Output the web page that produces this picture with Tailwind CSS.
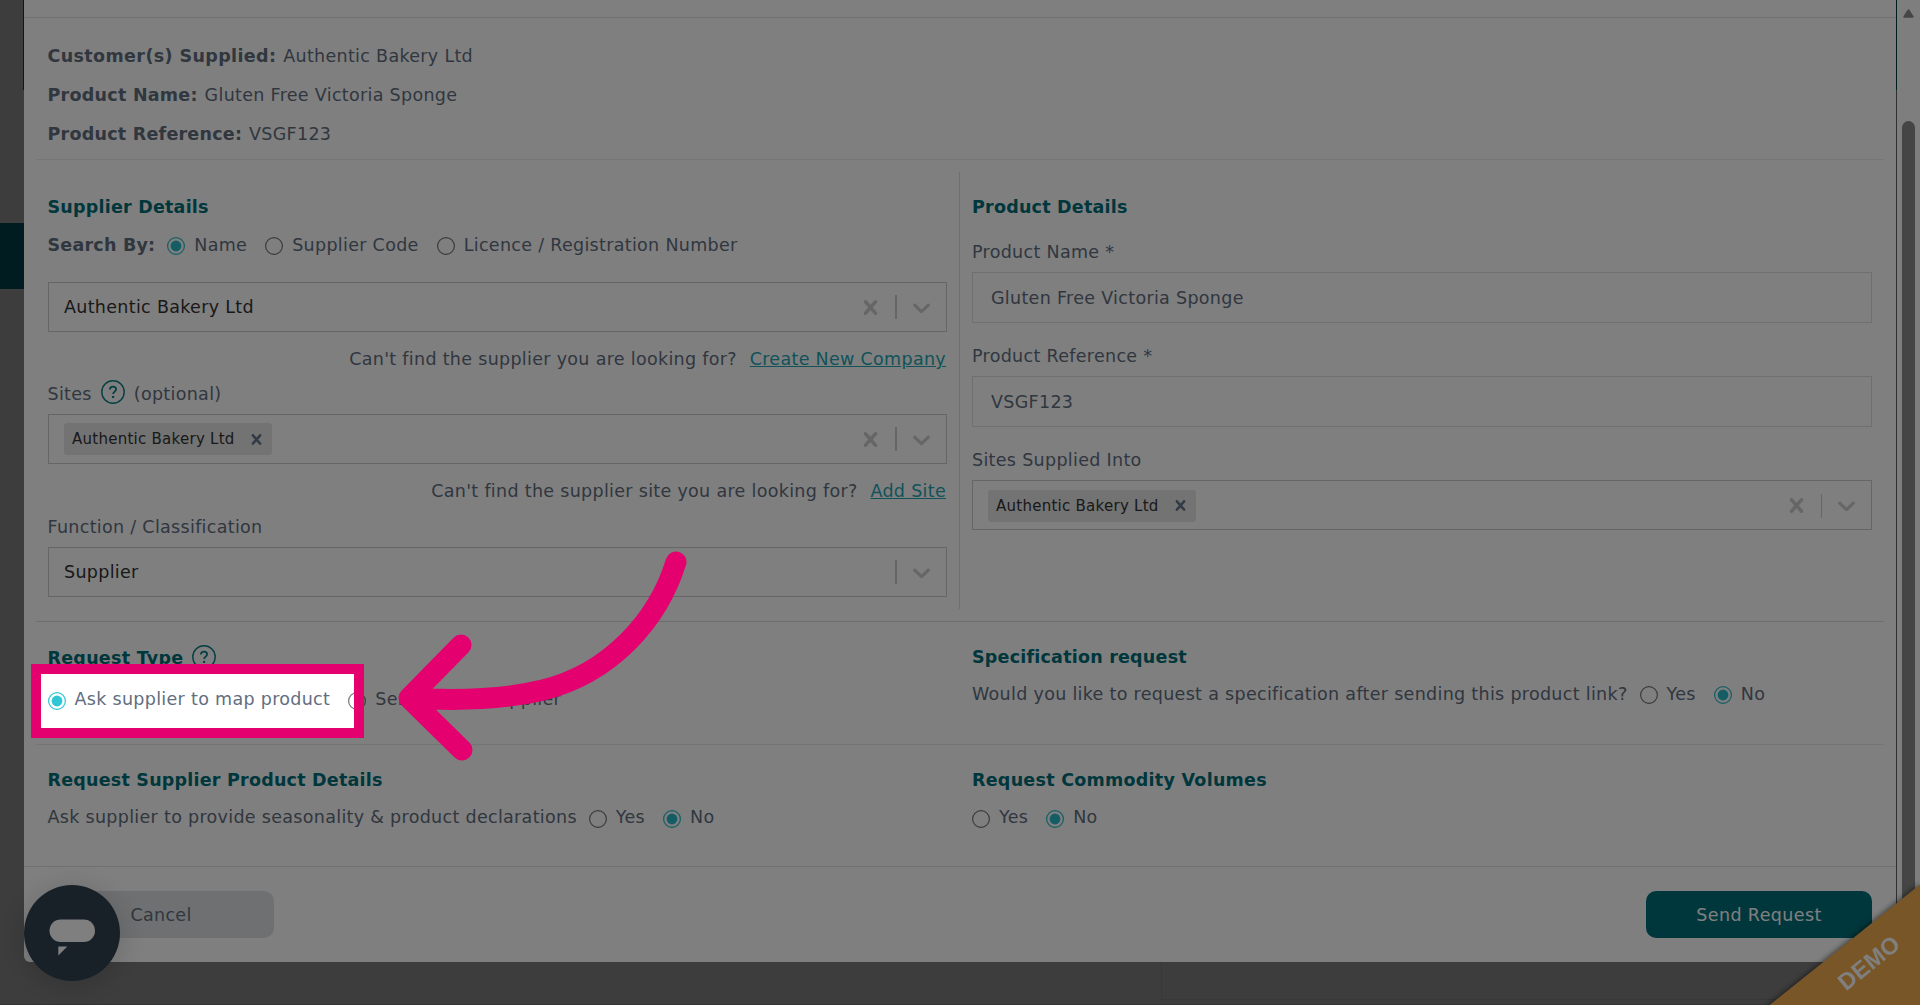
<!DOCTYPE html>
<html lang="en">
<head>
<meta charset="utf-8">
<title>Request product link</title>
<script src="https://cdn.jsdelivr.net/npm/@tailwindcss/browser@4"></script>
</head>
<body class="relative h-[1005px] w-[1920px] overflow-hidden bg-[#7b7b7b] font-['DejaVu_Sans',sans-serif] text-[17.5px] leading-[24px] tracking-[0.31px] text-[#626e7f]">
<svg class="hidden">
  <symbol id="x" viewBox="0 0 20 20"><path fill="currentColor" d="M14.348 14.849c-0.469 0.469-1.229 0.469-1.697 0l-2.651-3.030-2.651 3.029c-0.469 0.469-1.229 0.469-1.697 0-0.469-0.469-0.469-1.229 0-1.697l2.758-3.15-2.759-3.152c-0.469-0.469-0.469-1.228 0-1.697s1.228-0.469 1.697 0l2.652 3.031 2.651-3.031c0.469-0.469 1.228-0.469 1.697 0s0.469 1.229 0 1.697l-2.758 3.152 2.758 3.15c0.469 0.469 0.469 1.229 0 1.698z"/></symbol>
  <symbol id="chev" viewBox="0 0 20 20"><path fill="currentColor" d="M4.516 7.548c0.436-0.446 1.043-0.481 1.576 0l3.908 3.747 3.908-3.747c0.533-0.481 1.141-0.446 1.574 0 0.436 0.445 0.408 1.197 0 1.615-0.406 0.418-4.695 4.502-4.695 4.502-0.217 0.223-0.502 0.335-0.787 0.335s-0.57-0.112-0.789-0.335c0 0-4.287-4.084-4.695-4.502s-0.436-1.17 0-1.615z"/></symbol>
  <symbol id="on" viewBox="0 0 18 18"><circle cx="9" cy="9" r="8.4" fill="none" stroke="currentColor" stroke-width="1.2"/><circle cx="9" cy="9" r="5.4" fill="currentColor"/></symbol>
  <symbol id="off" viewBox="0 0 18 18"><circle cx="9" cy="9" r="8.4" fill="none" stroke="#767676" stroke-width="1.2"/></symbol>
  <symbol id="help" viewBox="0 0 24 24"><circle cx="12" cy="12" r="11.2" fill="none" stroke="#0b7f88" stroke-width="1.4"/><path d="M8.9 9.6c0-1.9 1.3-3 3.1-3s3.1 1.1 3.1 2.7c0 2.2-3 2.4-3 4.7" fill="none" stroke="#0b7f88" stroke-width="1.8"/><circle cx="12.1" cy="16.9" r="1.2" fill="#0b7f88"/></symbol>
</svg>

<!-- page behind the modal -->
<div class="absolute inset-y-0 left-0 w-6">
  <div class="mt-[223px] h-[66px] bg-[#003840]"></div>
</div>
<div class="absolute left-[23px] top-0 h-[90px] w-px bg-[#003840]"></div>
<div class="absolute left-[1161px] top-[962px] h-[38px] w-[700px] border-b border-l border-[#707070]"></div>
<div class="absolute bottom-0 left-0 h-px w-full bg-[#6c6468]"></div>
<div class="absolute left-[1896px] top-0 h-[1005px] w-px bg-[#606060]"></div>
<div class="absolute left-[1896px] top-0 h-[90px] w-px bg-[#003840]"></div>

<!-- scrollbar -->
<div class="absolute right-0 top-0 flex h-full w-[23px] flex-col items-center bg-[#fcfcfc] pr-px">
  <svg class="mt-[9px] h-[9px] w-[11px]" viewBox="0 0 11 9"><path d="M5.5 1.2L9.8 7.8H1.2Z" fill="#8b8b8b" stroke="#8b8b8b" stroke-width="2" stroke-linejoin="round"/></svg>
  <div class="mt-[103px] h-[900px] w-[13px] rounded-full bg-[#8b8b8b]"></div>
</div>

<!-- modal -->
<main class="absolute left-6 top-0 flex h-[962px] w-[1872px] flex-col rounded-b-md bg-white">
  <div class="h-[18px] shrink-0 border-b border-[#e2e2e2]"></div>
  <div class="px-3">
    <section class="flex h-[142px] flex-col gap-[15px] border-b border-[#ececec] pl-[11.500px] pr-3 pt-[26px]">
      <p><b class="mr-px tracking-[0.38px]">Customer(s) Supplied:</b> Authentic Bakery Ltd</p>
      <p><b class="mr-px tracking-[0.26px]">Product Name:</b> Gluten Free Victoria Sponge</p>
      <p><b class="mr-px tracking-[0.24px]">Product Reference:</b> VSGF123</p>
    </section>

    <section class="flex h-[462px] border-b border-[#dcdcdc] pb-3 pt-3">
      <div class="w-[924px] border-r border-[#dedede] pl-3 pr-3 pt-[23px]">
        <h2 class="-ml-[0.500px] font-bold tracking-[0.22px] text-[#006e78]">Supplier Details</h2>
        <div class="mt-[14px] -ml-[0.500px] flex items-center">
          <b class="tracking-[0.22px]">Search By:</b>
          <svg class="ml-3 mr-[9px] mt-[2px] size-[18px] text-[#29bac9]"><use href="#on"/></svg>Name
          <svg class="ml-[18px] mr-[9px] mt-[2px] size-[18px]"><use href="#off"/></svg>Supplier Code
          <svg class="ml-[18px] mr-[9px] mt-[2px] size-[18px]"><use href="#off"/></svg>Licence / Registration Number
        </div>
        <div class="mt-[25px] flex h-[50px] items-center border border-[#ccc] pl-[15px] pr-[14px] text-[#333]">
          <span class="grow">Authentic Bakery Ltd</span>
          <svg class="size-[29px] text-[#ccc]"><use href="#x"/></svg>
          <i class="ml-[10px] h-6 w-[2px] bg-[#ccc]"></i>
          <svg class="-mr-[4px] ml-[10px] size-[29px] text-[#ccc]"><use href="#chev"/></svg>
        </div>
        <p class="mt-[15px] pr-px text-right">Can't find the supplier you are looking for? <a class="ml-[7px] text-[#23a6b2] underline">Create New Company</a></p>
        <div class="mt-[11px] -ml-[0.500px] flex items-center">Sites <svg class="-mt-1 ml-[9px] mr-[9px] size-6"><use href="#help"/></svg> (optional)</div>
        <div class="mt-[8px] flex h-[50px] items-center border border-[#ccc] pl-[15px] pr-[14px]">
          <span class="flex h-[32px] items-center rounded-[3px] bg-[#e6e6e6] pl-2 pr-[5px] text-[15px] tracking-[0.26px] text-[#333]">Authentic Bakery Ltd<svg class="ml-[11px] size-[21px] text-[#64748b]"><use href="#x"/></svg></span>
          <span class="grow"></span>
          <svg class="size-[29px] text-[#ccc]"><use href="#x"/></svg>
          <i class="ml-[10px] h-6 w-[2px] bg-[#ccc]"></i>
          <svg class="-mr-[4px] ml-[10px] size-[29px] text-[#ccc]"><use href="#chev"/></svg>
        </div>
        <p class="mt-[15px] pr-px text-right">Can't find the supplier site you are looking for? <a class="ml-[7px] text-[#23a6b2] underline">Add Site</a></p>
        <p class="mt-3 -ml-[0.500px]">Function / Classification</p>
        <div class="mt-[8px] flex h-[50px] items-center border border-[#ccc] pl-[15px] pr-[14px] text-[#333]">
          <span class="grow">Supplier</span>
          <i class="ml-[10px] h-6 w-[2px] bg-[#ccc]"></i>
          <svg class="-mr-[4px] ml-[10px] size-[29px] text-[#ccc]"><use href="#chev"/></svg>
        </div>
      </div>
      <div class="grow pl-3 pr-3 pt-[23px]">
        <h2 class="font-bold tracking-[0.22px] text-[#006e78]">Product Details</h2>
        <p class="mt-[21px]">Product Name *</p>
        <div class="mt-[8px] flex h-[51px] items-center border border-[#dedede] px-[18px]">Gluten Free Victoria Sponge</div>
        <p class="mt-[21px]">Product Reference *</p>
        <div class="mt-[8px] flex h-[51px] items-center border border-[#dedede] px-[18px]">VSGF123</div>
        <p class="mt-[21px]">Sites Supplied Into</p>
        <div class="mt-[8px] flex h-[50px] items-center border border-[#ccc] pl-[15px] pr-[14px] pt-px">
          <span class="flex h-[32px] items-center rounded-[3px] bg-[#e6e6e6] pl-2 pr-[5px] text-[15px] tracking-[0.26px] text-[#333]">Authentic Bakery Ltd<svg class="ml-[11px] size-[21px] text-[#64748b]"><use href="#x"/></svg></span>
          <span class="grow"></span>
          <svg class="size-[29px] text-[#ccc]"><use href="#x"/></svg>
          <i class="ml-[10px] h-6 w-px bg-[#ccc]"></i>
          <svg class="-mr-[4px] ml-[10px] size-[29px] text-[#ccc]"><use href="#chev"/></svg>
        </div>
      </div>
    </section>

    <section class="flex h-[123px] border-b border-[#e8e8e8]">
      <div class="w-[924px] pl-[11.500px] pt-6">
        <h2 class="flex items-center font-bold tracking-[0.26px] text-[#006e78]">Request Type <svg class="-mt-[2px] ml-[9px] size-6"><use href="#help"/></svg></h2>
        <div class="mt-[17px] flex items-center">
          <svg class="mr-[9px] mt-[3px] size-[18px] text-[#2fc6d6]"><use href="#on"/></svg>Ask supplier to map product
          <svg class="ml-[18px] mr-[9px] mt-[3px] size-[18px]"><use href="#off"/></svg>Send link to supplier
        </div>
      </div>
      <div class="pl-3 pt-[23px]">
        <h2 class="font-bold tracking-[0.22px] text-[#006e78]">Specification request</h2>
        <div class="mt-[13px] flex items-center">Would you like to request a specification after sending this product link?
          <svg class="ml-3 mr-[9px] mt-[2px] size-[18px]"><use href="#off"/></svg>Yes
          <svg class="ml-[18px] mr-[9px] mt-[2px] size-[18px] text-[#29bac9]"><use href="#on"/></svg>No
        </div>
      </div>
    </section>

    <section class="flex h-[121px]">
      <div class="w-[924px] pl-[11.500px] pt-[23px]">
        <h2 class="font-bold tracking-[0.22px] text-[#006e78]">Request Supplier Product Details</h2>
        <div class="mt-[13px] flex items-center">Ask supplier to provide seasonality &amp; product declarations
          <svg class="ml-3 mr-[9px] mt-[3px] size-[18px]"><use href="#off"/></svg>Yes
          <svg class="ml-[18px] mr-[9px] mt-[3px] size-[18px] text-[#29bac9]"><use href="#on"/></svg>No
        </div>
      </div>
      <div class="pl-3 pt-[23px]">
        <h2 class="font-bold tracking-[0.26px] text-[#006e78]">Request Commodity Volumes</h2>
        <div class="mt-[13px] flex items-center">
          <svg class="mr-[9px] mt-[3px] size-[18px]"><use href="#off"/></svg>Yes
          <svg class="ml-[18px] mr-[9px] mt-[3px] size-[18px] text-[#29bac9]"><use href="#on"/></svg>No
        </div>
      </div>
    </section>
  </div>
  <footer class="flex grow items-start justify-between border-t border-[#e2e2e2] px-6 pt-[24px]">
    <button class="h-[47px] w-[226px] rounded-[10px] bg-[#dfe1e5] tracking-[0.31px]">Cancel</button>
    <button class="h-[47px] w-[226px] rounded-[10px] bg-[#006e78] tracking-[0.4px] text-white">Send Request</button>
  </footer>
</main>

<!-- chat launcher -->
<div class="absolute left-6 top-[885px] size-24 rounded-full bg-[#304250] shadow-[0_4px_32px_rgba(0,0,0,0.18)]">
  <svg viewBox="0 0 96 96"><rect x="25.500" y="34.500" width="45.500" height="22.500" rx="11.250" fill="#fff"/><path d="M34.300 61.500h9l-9 9z" fill="#fff"/></svg>
</div>

<!-- ribbon -->
<div class="absolute bottom-0 right-0 h-[121px] w-[152px] overflow-visible">
  <svg class="h-full w-full overflow-visible drop-shadow-[0_0_3px_rgba(0,0,0,0.7)]" viewBox="0 0 152 121"><path d="M1 121.500L152 .5V125H1z" fill="#f0ad4e"/><text x="0" y="0" transform="translate(106 85) rotate(-39)" text-anchor="middle" font-family="Liberation Sans, sans-serif" font-weight="700" font-size="23.500" fill="#fff">DEMO</text></svg>
</div>

<!-- tour spotlight -->
<div class="absolute left-[41px] top-[674px] h-[54px] w-[313px] shadow-[0_0_0_2000px_rgba(0,0,0,0.5)]"></div>
<div class="absolute left-[31px] top-[664px] h-[74px] w-[333px] border-[10px] border-[#e5006f]"></div>
<svg class="absolute left-[380px] top-[530px] h-[250px] w-[330px]" viewBox="0 0 330 250" fill="none" stroke="#e5006f" stroke-width="21" stroke-linecap="round" stroke-linejoin="round"><path d="M296 32C278 90 231 143 163 160C124 169.500 77 171 29 168M81 115L29 168L82 220"/></svg>
</body>
</html>
